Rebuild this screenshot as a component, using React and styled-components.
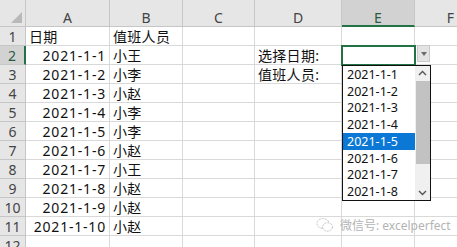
import { Fragment } from "react";
import styled, { createGlobalStyle } from "styled-components";

const Global = createGlobalStyle`
  body {
    margin: 0;
    background: #ffffff;
    overflow: hidden;
    font-family: "Noto Sans", "Noto Sans CJK SC", sans-serif;
  }
`;

const Wrap = styled.div`
  position: relative;
  width: 457px;
  height: 247px;
  overflow: hidden;
`;

const Grid = styled.div`
  display: grid;
  grid-template-columns: 26px 84px 73px 72px 87px 73px 72px;
  grid-template-rows: 27px repeat(12, 19px);
  width: 487px;
`;

const Corner = styled.div`
  background: #e6e6e6;
  border-right: 1px solid #c6c6c6;
  border-bottom: 1px solid #c6c6c6;
  box-sizing: border-box;
  position: relative;
  &::after {
    content: "";
    position: absolute;
    right: 3px;
    bottom: 3px;
    border-style: solid;
    border-width: 0 0 11px 11px;
    border-color: transparent transparent #b9b9b9 transparent;
  }
`;

const ColHead = styled.div`
  background: ${(p) => (p.$active ? "#d2d2d2" : "#e6e6e6")};
  border-right: 1px solid #c6c6c6;
  border-bottom: ${(p) => (p.$active ? "2px solid #217346" : "1px solid #c6c6c6")};
  box-sizing: border-box;
  display: flex;
  justify-content: center;
  padding-top: 9px;
  font-size: 14px;
  line-height: 17px;
  color: ${(p) => (p.$active ? "#2c5a3e" : "#444")};
`;

const RowHead = styled.div`
  background: ${(p) => (p.$active ? "#d2d2d2" : "#e6e6e6")};
  border-right: ${(p) => (p.$active ? "2px solid #217346" : "1px solid #c6c6c6")};
  border-bottom: 1px solid #c6c6c6;
  box-sizing: border-box;
  display: flex;
  justify-content: center;
  padding-top: 1px;
  font-size: 14px;
  line-height: 18px;
  color: ${(p) => (p.$active ? "#2c5a3e" : "#444")};
`;

const Cell = styled.div`
  border-right: 1px solid #d9d9d9;
  border-bottom: 1px solid #d9d9d9;
  box-sizing: border-box;
  display: flex;
  justify-content: ${(p) => (p.$right ? "flex-end" : "flex-start")};
  padding: 1px 3px 0 3px;
  font-size: 14px;
  line-height: 18px;
  color: #111;
  white-space: nowrap;
  letter-spacing: ${(p) => (p.$right ? "0.8px" : "0.3px")};
  ${(p) =>
    p.$selected &&
    `
    outline: 2px solid #217346;
    outline-offset: -1px;
    position: relative;
    z-index: 2;
  `}
`;

const DropButton = styled.div`
  position: absolute;
  left: 417px;
  top: 45px;
  width: 13px;
  height: 17px;
  background: #e3e3e3;
  border: 1px solid #c9c9c9;
  box-sizing: border-box;
  display: flex;
  align-items: center;
  justify-content: center;
  &::after {
    content: "";
    border-style: solid;
    border-width: 4px 3.5px 0 3.5px;
    border-color: #6b6b6b transparent transparent transparent;
  }
`;

const List = styled.div`
  position: absolute;
  left: 342px;
  top: 65px;
  width: 89px;
  height: 136px;
  border: 1px solid #111;
  box-sizing: border-box;
  background: #fff;
  display: flex;
  z-index: 3;
`;

const Items = styled.div`
  flex: 1;
  display: flex;
  flex-direction: column;
`;

const Item = styled.div`
  height: 16.75px;
  display: flex;
  align-items: center;
  padding-left: 4px;
  font-size: 12.5px;
  color: ${(p) => (p.$hl ? "#fff" : "#111")};
  background: ${(p) => (p.$hl ? "#0a78d4" : "transparent")};
`;

const Scroll = styled.div`
  width: 15px;
  background: #f0f0f0;
  display: flex;
  flex-direction: column;
  align-items: center;
`;

const Arrow = styled.div`
  height: 14px;
  display: flex;
  align-items: center;
  justify-content: center;
`;

const Thumb = styled.div`
  width: 14px;
  height: 83px;
  background: #c2c2c2;
  margin-top: 1px;
`;

const Track = styled.div`
  flex: 1;
`;

const Watermark = styled.div`
  position: absolute;
  left: 316px;
  top: 216px;
  display: flex;
  align-items: center;
  gap: 6px;
  font-size: 12px;
  color: #b4b4b4;
  z-index: 3;
`;

const cols = ["A", "B", "C", "D", "E", "F"];

const names = ["小王", "小李", "小赵", "小李", "小李", "小赵", "小王", "小赵", "小赵", "小赵"];

const rows = [
  { A: "日期", B: "值班人员" },
  ...names.map((n, i) => ({ A: `2021-1-${i + 1}`, B: n, right: true })),
  {},
];
rows[1].D = "选择日期:";
rows[2].D = "值班人员:";

const Chevron = ({ up }) => (
  <svg width="9" height="6" viewBox="0 0 9 6">
    <path
      d={up ? "M1 5 L4.5 1.5 L8 5" : "M1 1 L4.5 4.5 L8 1"}
      fill="none"
      stroke="#555"
      strokeWidth="1.4"
    />
  </svg>
);

const App = () => {
  return (
    <Wrap>
      <Global />
      <Grid>
        <Corner />
        {cols.map((c) => (
          <ColHead key={c} $active={c === "E"}>
            {c}
          </ColHead>
        ))}
        {rows.map((r, i) => (
          <Fragment key={i}>
            <RowHead $active={i === 1}>{i + 1}</RowHead>
            {cols.map((c) => (
              <Cell
                key={c}
                $right={c === "A" && r.right}
                $selected={c === "E" && i === 1}
              >
                {r[c] || ""}
              </Cell>
            ))}
          </Fragment>
        ))}
      </Grid>
      <DropButton />
      <List>
        <Items>
          {names.slice(0, 8).map((_, i) => (
            <Item key={i} $hl={i === 4}>
              {`2021-1-${i + 1}`}
            </Item>
          ))}
        </Items>
        <Scroll>
          <Arrow>
            <Chevron up />
          </Arrow>
          <Thumb />
          <Track />
          <Arrow>
            <Chevron />
          </Arrow>
        </Scroll>
      </List>
      <Watermark>
        <svg width="18" height="16" viewBox="0 0 18 16">
          <ellipse cx="7" cy="6.5" rx="6" ry="5" fill="none" stroke="#c4c4c4" strokeWidth="1" strokeDasharray="2 1" />
          <ellipse cx="11.5" cy="10" rx="5" ry="4.2" fill="#fff" stroke="#c4c4c4" strokeWidth="1" strokeDasharray="2 1" />
        </svg>
        <span>微信号: excelperfect</span>
      </Watermark>
    </Wrap>
  );
};

export default App;
